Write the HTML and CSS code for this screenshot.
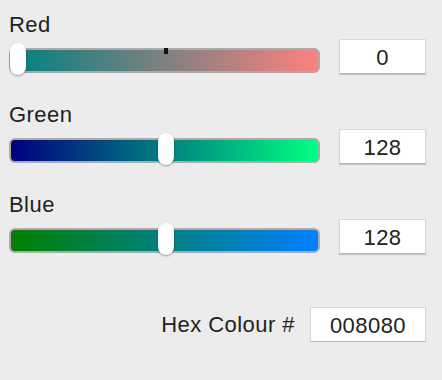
FILE: index.html
```html
<!DOCTYPE html>
<html lang="en">
<head>
    <meta charset="UTF-8">
    <title>Colour Picker</title>
    <link rel="stylesheet" href="styles.css">
</head>
<body>
    <div class="panel">
        <div class="channel">
            <div class="channel-label">Red</div>
            <div class="channel-row">
                <div class="track track-red">
                    <span class="tick"></span>
                    <span class="thumb" style="left: -1px"></span>
                </div>
                <div class="value-box">0</div>
            </div>
        </div>

        <div class="channel">
            <div class="channel-label">Green</div>
            <div class="channel-row">
                <div class="track track-green">
                    <span class="thumb" style="left: 147px"></span>
                </div>
                <div class="value-box">128</div>
            </div>
        </div>

        <div class="channel">
            <div class="channel-label">Blue</div>
            <div class="channel-row">
                <div class="track track-blue">
                    <span class="thumb" style="left: 147px"></span>
                </div>
                <div class="value-box">128</div>
            </div>
        </div>

        <div class="hex-row">
            <span class="hex-label">Hex Colour #</span>
            <div class="value-box hex-box">008080</div>
        </div>
    </div>
</body>
</html>
```

FILE: styles.css
```css
* {
    margin: 0;
    padding: 0;
    box-sizing: border-box;
}

body {
    background-color: #ececec;
    color: #222222;
    font-family: 'Liberation Sans', Arial, sans-serif;
    font-size: 22px;
    letter-spacing: 0.45px;
}

.panel {
    padding: 10px 16px 0 9px;
}

.channel {
    height: 90px;
}

.channel-label {
    line-height: 29px;
    height: 28px;
}

.channel-row {
    display: flex;
    align-items: flex-start;
    gap: 19px;
    margin-top: 1px;
}

.track {
    position: relative;
    flex: 1;
    height: 25px;
    margin-top: 9px;
    border: 2px solid #ababab;
    border-radius: 6px;
}

.track-red {
    background: linear-gradient(90deg, #008080, #ff8080);
}

.track-green {
    background: linear-gradient(90deg, #000080, #00ff80);
}

.track-blue {
    background: linear-gradient(90deg, #008000, #0080ff);
}

.tick {
    position: absolute;
    top: -2px;
    left: 153px;
    width: 4px;
    height: 6px;
    background-color: #111111;
}

.thumb {
    position: absolute;
    top: -7px;
    width: 16px;
    height: 32px;
    background-color: #ffffff;
    border-radius: 8px;
    box-shadow: 0 1px 2px rgba(0, 0, 0, 0.35);
}

.value-box {
    width: 87px;
    height: 35px;
    line-height: 35px;
    text-align: center;
    background-color: #ffffff;
    border: 1px solid #d8d8d8;
    border-bottom-color: #b5b5b5;
    box-shadow: 0 1px 1px rgba(0, 0, 0, 0.15);
}

.hex-row {
    display: flex;
    justify-content: flex-end;
    align-items: center;
    gap: 15px;
    margin-top: 27px;
}

.hex-box {
    width: 116px;
}
```
